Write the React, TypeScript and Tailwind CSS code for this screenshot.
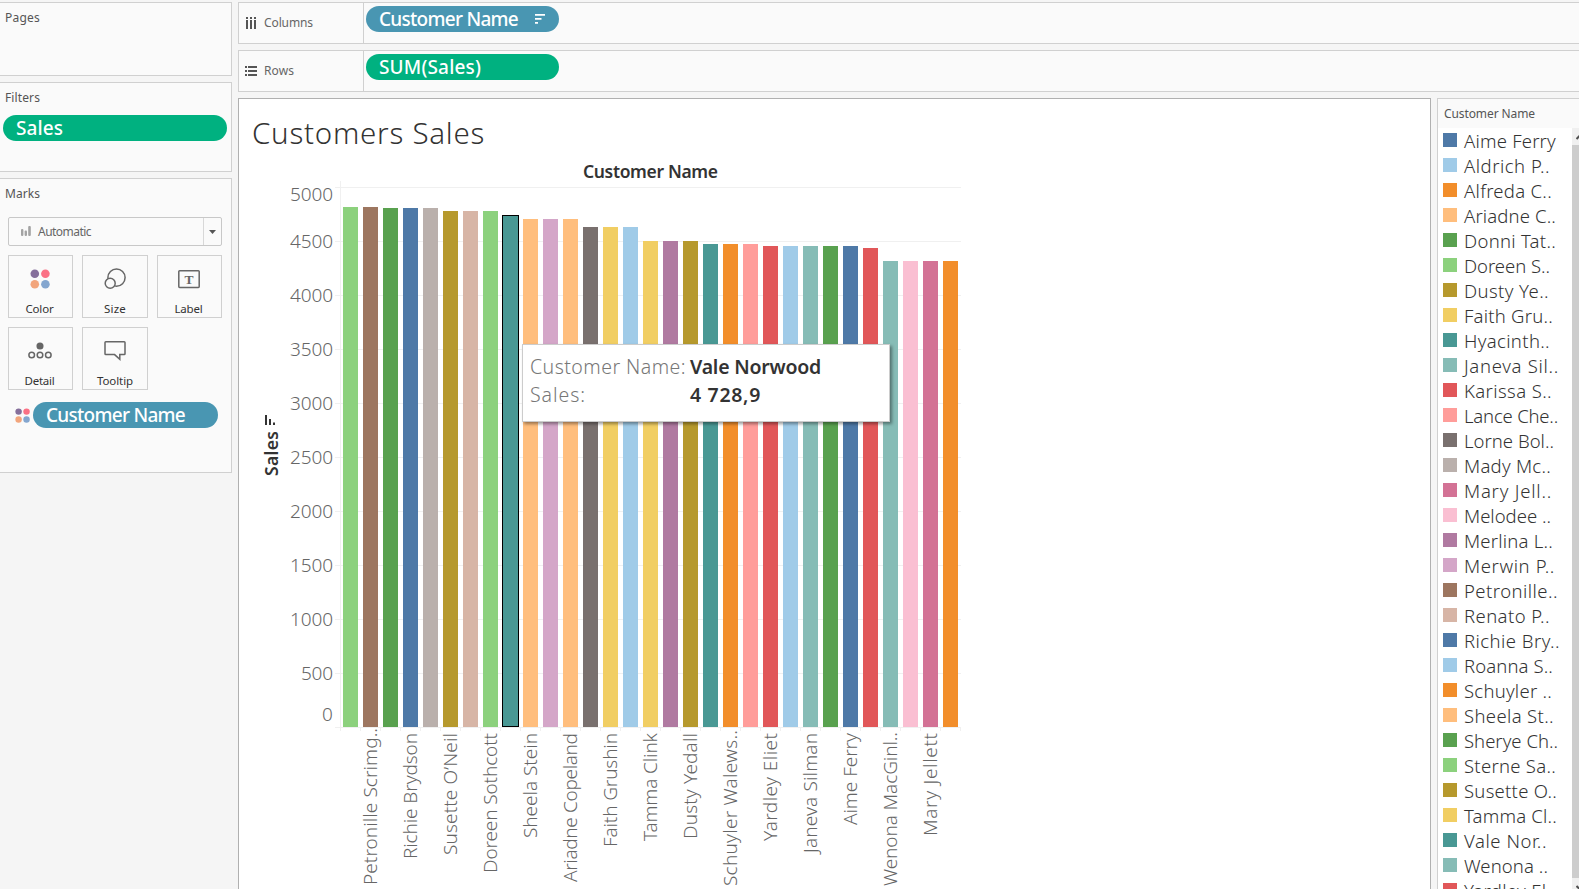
import { useLayoutEffect, useRef, useState } from "react";

const C = {
  blue: "#4e79a7", sky: "#a0cbe8", orange: "#f28e2b", peach: "#ffbe7d", green: "#59a14f",
  lime: "#8cd17d", olive: "#b6992d", yellow: "#f1ce63", teal: "#499894", aqua: "#86bcb6",
  red: "#e15759", salmon: "#ff9d9a", gray: "#79706e", silver: "#bab0ac", rose: "#d37295",
  pink: "#fabfd2", purple: "#b07aa1", lilac: "#d4a6c8", brown: "#9d7660", tan: "#d7b5a6",
};

const BARS: [string, number][] = [
  [C.lime, 207], [C.brown, 207], [C.green, 208], [C.blue, 208], [C.silver, 208],
  [C.olive, 211], [C.tan, 211], [C.lime, 211], [C.teal, 215], [C.peach, 219],
  [C.lilac, 219], [C.peach, 219], [C.gray, 227], [C.yellow, 227], [C.sky, 227],
  [C.yellow, 241], [C.purple, 241], [C.olive, 241], [C.teal, 244], [C.orange, 244],
  [C.salmon, 244], [C.red, 246], [C.sky, 246], [C.aqua, 246], [C.green, 246],
  [C.blue, 246], [C.red, 248], [C.aqua, 261], [C.pink, 261], [C.rose, 261], [C.orange, 261],
];
const SELECTED = 8;

// label, top, bottom
const NAMES: [string, number, number][] = [
  ["Petronille Scrimg..", 728, 885], ["Richie Brydson", 733, 859], ["Susette O’Neil", 733, 855],
  ["Doreen Sothcott", 733, 873], ["Sheela Stein", 733, 838], ["Ariadne Copeland", 733, 882],
  ["Faith Grushin", 733, 847], ["Tamma Clink", 733, 841], ["Dusty Yedall", 733, 839],
  ["Schuyler Walews..", 730, 886], ["Yardley Eliet", 733, 841], ["Janeva Silman", 733, 853],
  ["Aime Ferry", 733, 825], ["Wenona MacGinl..", 732, 886], ["Mary Jellett", 733, 836],
];

const LEGEND: [string, string, number][] = [
  ["Aime Ferry", C.blue, 91], ["Aldrich P..", C.sky, 85], ["Alfreda C..", C.orange, 87],
  ["Ariadne C..", C.peach, 91], ["Donni Tat..", C.green, 91], ["Doreen S..", C.lime, 85],
  ["Dusty Ye..", C.olive, 84], ["Faith Gru..", C.yellow, 88], ["Hyacinth..", C.teal, 85],
  ["Janeva Sil..", C.aqua, 94], ["Karissa S..", C.red, 87], ["Lance Che..", C.salmon, 93],
  ["Lorne Bol..", C.gray, 89], ["Mady Mc..", C.silver, 86], ["Mary Jell..", C.rose, 87],
  ["Melodee ..", C.pink, 86], ["Merlina L..", C.purple, 88], ["Merwin P..", C.lilac, 90],
  ["Petronille..", C.brown, 93], ["Renato P..", C.tan, 85], ["Richie Bry..", C.blue, 95],
  ["Roanna S..", C.sky, 88], ["Schuyler ..", C.orange, 87], ["Sheela St..", C.peach, 89],
  ["Sherye Ch..", C.green, 93], ["Sterne Sa..", C.lime, 91], ["Susette O..", C.olive, 92],
  ["Tamma Cl..", C.yellow, 92], ["Vale Nor..", C.teal, 82], ["Wenona ..", C.aqua, 83],
  ["Yardley El..", C.red, 91],
];

/** Text tracked so that it fills the given width. */
function Fit({ w, text, className = "" }: { w: number; text: string; className?: string }) {
  const ref = useRef<HTMLSpanElement>(null);
  const [spacing, setSpacing] = useState(0);
  useLayoutEffect(() => {
    if (ref.current) setSpacing((w + 1 - ref.current.getBoundingClientRect().width) / text.length);
  }, [w, text]);
  return (
    <span ref={ref} className={`block w-fit whitespace-pre ${className}`} style={{ letterSpacing: spacing }}>
      {text}
    </span>
  );
}

function ColorDots({ size }: { size: number }) {
  return (
    <svg width={size} height={size} viewBox="0 0 20 20" className="shrink-0">
      <circle cx="4.8" cy="4.8" r="4.3" fill="#856f9b" />
      <circle cx="15.4" cy="4.8" r="4.3" fill="#fb7185" />
      <circle cx="4.8" cy="15.3" r="4.3" fill="#f2a57c" />
      <circle cx="15.4" cy="15.3" r="4.3" fill="#84a6cf" />
    </svg>
  );
}

const iconClass = "block h-6 w-6 fill-none stroke-[#666] [stroke-width:1.5]";

function MarkButton({ label, w, pad = "pr-[2px]", children }: { label: string; w: number; pad?: string; children: React.ReactNode }) {
  return (
    <div className={`flex h-[63px] flex-col items-center border border-[#d0d0d0] bg-[#fafafa] pt-[11px] ${pad}`}>
      <div className="flex h-6 items-center justify-center">{children}</div>
      <Fit w={w} text={label} className="mt-[10px] text-[11.5px] leading-4 text-[#333]" />
    </div>
  );
}

function Marks() {
  return (
    <section className="mt-[6px] h-[295px] border border-l-0 border-[#d0d0d0] bg-[#fafafa] pl-[5px] pt-[7px]">
      <Fit w={34} text="Marks" className="text-[12px] leading-4 text-[#555]" />
      <div className="ml-[3px] mt-[15px] flex h-[29px] w-[214px] items-center rounded-[2px] border border-[#c8c8c8] pl-[12px]">
        <svg width="11" height="11" viewBox="0 0 11 11" fill="#a3a3a3">
          <rect x="0" y="3" width="2.4" height="7" rx="1" />
          <rect x="3.6" y="4.5" width="2.4" height="5.5" rx="1" />
          <rect x="7.2" y="0" width="2.6" height="10" rx="1" />
        </svg>
        <Fit w={52} text="Automatic" className="ml-[6px] text-[12px] leading-4 text-[#666]" />
        <div className="ml-auto flex h-full w-[18px] items-center justify-center border-l border-[#d8d8d8]">
          <svg width="7" height="4" viewBox="0 0 7 4" fill="#555"><path d="M0 0h7L3.5 4z" /></svg>
        </div>
      </div>
      <div className="ml-[3px] mt-[9px] grid grid-cols-[65px_66px_65px] gap-x-[9px] gap-y-[9px]">
        <MarkButton label="Color" w={27}><ColorDots size={20} /></MarkButton>
        <MarkButton label="Size" w={21} pad="pr-0">
          <svg viewBox="0 0 24 24" className={iconClass}>
            <circle cx="13.5" cy="10.6" r="8.6" />
            <circle cx="7.2" cy="16.2" r="5" fill="#fafafa" />
          </svg>
        </MarkButton>
        <MarkButton label="Label" w={27}>
          <svg viewBox="0 0 24 24" className={iconClass}>
            <rect x="1.8" y="3.8" width="20.4" height="16.6" rx="0.8" />
            <text x="12" y="17" textAnchor="middle" className="fill-[#666] stroke-none font-['Liberation_Serif',serif] text-[13.5px] font-bold">T</text>
          </svg>
        </MarkButton>
        <MarkButton label="Detail" w={29}>
          <svg viewBox="0 0 24 24" className={iconClass}>
            <circle cx="12" cy="7" r="2.8" fill="#666" />
            <circle cx="3.7" cy="16" r="2.8" />
            <circle cx="12" cy="16" r="2.8" />
            <circle cx="20.3" cy="16" r="2.8" />
          </svg>
        </MarkButton>
        <MarkButton label="Tooltip" w={35} pad="pr-0">
          <svg viewBox="0 0 24 24" className={iconClass}>
            <path d="M2.800 2.800h18.400q.8 0 .8.8v11.200q0 .8-.8.8h-4.400v4.800l-5.200-4.800H2.800q-.8 0-.8-.8V3.600q0-.8.8-.8z" />
          </svg>
        </MarkButton>
      </div>
      <div className="ml-[10px] mt-[12px] flex items-center">
        <ColorDots size={15} />
        <div className="ml-[3px] flex h-[26px] w-[185px] items-center rounded-full bg-[#4996b2] pl-[13px] text-white">
          <Fit w={138} text="Customer Name" className="text-[19px] font-medium leading-6" />
        </div>
      </div>
    </section>
  );
}

function Sidebar() {
  return (
    <aside className="w-[232px] shrink-0 pt-[2px]">
      <section className="h-[74px] border border-l-0 border-[#d0d0d0] bg-[#fafafa] pl-[5px] pt-[7px]">
        <Fit w={34} text="Pages" className="text-[12px] leading-4 text-[#555]" />
      </section>
      <section className="mt-[6px] h-[90px] border border-l-0 border-[#d0d0d0] bg-[#fafafa] pl-[3px] pt-[7px]">
        <Fit w={34} text="Filters" className="ml-[2px] text-[12px] leading-4 text-[#555]" />
        <div className="mt-[9px] flex h-[26px] w-[224px] items-center rounded-full bg-[#00b180] pl-[13px] text-white">
          <Fit w={46} text="Sales" className="text-[19px] font-medium leading-6" />
        </div>
      </section>
      <Marks />
    </aside>
  );
}

function Shelves() {
  return (
    <div className="flex flex-col gap-[6px] pt-[2px]">
      <div className="flex h-[42px] border border-r-0 border-[#d0d0d0] bg-[#fafafa]">
        <div className="flex w-[125px] items-center border-r border-[#d0d0d0] pl-[7px]">
          <svg width="11" height="12" viewBox="0 0 11 12" fill="#555">
            <path d="M0 0h2v2H0zM4 0h2v2H4zM8 0h2v2H8zM0 3h2v9H0zM4 3h2v9H4zM8 3h2v9H8z" />
          </svg>
          <Fit w={48} text="Columns" className="ml-[7px] text-[12px] leading-4 text-[#666]" />
        </div>
        <div className="ml-[2px] mt-[3px] flex h-[26px] w-[193px] items-center rounded-full bg-[#4996b2] pl-[13px] text-white">
          <Fit w={138} text="Customer Name" className="text-[19px] font-medium leading-6" />
          <svg width="10" height="10" viewBox="0 0 10 10" fill="#fff" className="ml-[17px]">
            <path d="M0 0h10v1.800H0zM0 4h6.500v1.800H0zM0 8h3v1.800H0z" />
          </svg>
        </div>
      </div>
      <div className="flex h-[42px] border border-r-0 border-[#d0d0d0] bg-[#fafafa]">
        <div className="flex w-[125px] items-center border-r border-[#d0d0d0] pl-[6px]">
          <svg width="12" height="10" viewBox="0 0 12 10" fill="#555">
            <path d="M0 0h2v2H0zM0 4h2v2H0zM0 8h2v2H0zM3 0h9v2H3zM3 4h9v2H3zM3 8h9v2H3z" />
          </svg>
          <Fit w={29} text="Rows" className="ml-[7px] text-[12px] leading-4 text-[#666]" />
        </div>
        <div className="ml-[2px] mt-[3px] flex h-[26px] w-[193px] items-center rounded-full bg-[#00b180] pl-[13px] text-white">
          <Fit w={101} text="SUM(Sales)" className="text-[19px] font-medium leading-6" />
        </div>
      </div>
    </div>
  );
}

function Chart() {
  return (
    <svg width="730" height="729" viewBox="239 160 730 729" className="block font-['Noto_Sans',sans-serif]">
      {Array.from({ length: 11 }, (_, i) => (
        <rect key={i} x="335" y={187 + i * 54} width="626" height="1" fill="#f0f0f0" />
      ))}
      <rect x="340" y="181" width="1" height="550" fill="#f0f0f0" />
      {Array.from({ length: 31 }, (_, i) => (
        <rect key={i} x={360 + i * 20} y="727" width="1" height="4" fill="#f0f0f0" />
      ))}
      {BARS.map(([color, top], i) =>
        i === SELECTED ? (
          <rect key={i} x={342.5 + i * 20} y={top + 0.5} width="16" height={726 - top} fill={color} stroke="#000" />
        ) : (
          <rect key={i} x={343 + i * 20} y={top} width="15" height={727 - top} fill={color} />
        ),
      )}
      <g className="fill-[#666] text-[19px] font-light">
        {Array.from({ length: 11 }, (_, i) => {
          const value = 5000 - i * 500;
          const y = i === 0 ? 201 : i === 10 ? 721 : 194 + i * 54;
          const width = value === 0 ? 11 : value < 1000 ? 32 : 43;
          return (
            <text key={value} x={333 - width} y={y} textLength={width}>{value}</text>
          );
        })}
        {NAMES.map(([name, top, bottom], i) => (
          <text key={name} transform={`translate(${377 + i * 40} ${bottom}) rotate(-90)`} textLength={bottom - top}>
            {name}
          </text>
        ))}
      </g>
      <text x="583" y="178" textLength="135" className="fill-[#333] text-[17.500px] font-semibold">Customer Name</text>
      <text transform="translate(277.500 476) rotate(-90)" textLength="45" className="fill-[#333] text-[17.500px] font-semibold">Sales</text>
      <path d="M265 415h2v10h-2zM269 419h2v6h-2zM273 422.500h2v2.500h-2z" fill="#333" />
    </svg>
  );
}

function Tooltip() {
  return (
    <div className="absolute left-[283px] top-[245px] grid h-[78px] w-[368px] grid-cols-[160px_1fr] content-start border border-[#ccc] bg-white pl-[7px] pt-[8px] text-[19.500px] leading-[28px] shadow-[2px_2px_3px_rgba(0,0,0,0.4)]">
      <Fit w={155} text="Customer Name:" className="font-light text-[#777]" />
      <Fit w={130} text="Vale Norwood" className="font-semibold text-[#333]" />
      <Fit w={55} text="Sales:" className="font-light text-[#777]" />
      <Fit w={70} text="4 728,9" className="font-semibold text-[#333]" />
    </div>
  );
}

function Legend() {
  return (
    <aside className="ml-[6px] flex flex-1 flex-col overflow-hidden border-l border-t border-[#d0d0d0] bg-white">
      <div className="h-[29px] shrink-0 bg-[#fafafa] pl-[6px] pt-[7px]">
        <Fit w={90} text="Customer Name" className="text-[12px] leading-4 text-[#555]" />
      </div>
      <div className="flex min-h-0 flex-1">
        <ul className="flex-1 overflow-hidden pl-[5px]">
          {LEGEND.map(([name, color, w]) => (
            <li key={name} className="flex h-[25px]">
              <span className="mt-[5px] h-[14px] w-[14px] shrink-0" style={{ backgroundColor: color }} />
              <Fit w={w} text={name} className="ml-[7px] text-[18.500px] font-light leading-[25px] text-[#333]" />
            </li>
          ))}
        </ul>
        <div className="flex w-[7px] flex-col overflow-hidden bg-[#cdcdcd]">
          <div className="h-[17px] bg-[#f0f0f0] pl-[4px] pt-[6px]">
            <svg width="9" height="6" viewBox="0 0 9 6" className="fill-none stroke-[#505050] stroke-2"><path d="M0.500 5L4.500 1l4 4" /></svg>
          </div>
          <div className="mt-auto h-[11px] bg-[#f0f0f0] pl-[4px] pt-[7px]">
            <svg width="9" height="6" viewBox="0 0 9 6" className="fill-none stroke-[#505050] stroke-2"><path d="M0.500 1L4.500 5l4-4" /></svg>
          </div>
        </div>
      </div>
    </aside>
  );
}

export default function App() {
  return (
    <div className="flex h-[889px] w-[1579px] overflow-hidden bg-[#f5f5f5] font-['Noto_Sans',sans-serif]">
      <Sidebar />
      <main className="ml-[6px] flex min-w-0 flex-1 flex-col">
        <Shelves />
        <div className="mt-[6px] flex min-h-0 flex-1">
          <section className="relative w-[1193px] shrink-0 border border-b-0 border-[#b0b0b0] bg-white">
            <div className="h-[61px] pl-[13px] pt-[14px]">
              <Fit w={232} text="Customers Sales" className="text-[29.500px] font-light leading-10 text-[#333]" />
            </div>
            <Chart />
            <Tooltip />
          </section>
          <Legend />
        </div>
      </main>
    </div>
  );
}
